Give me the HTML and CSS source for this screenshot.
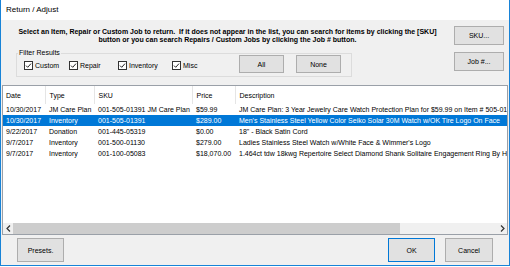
FILE: index.html
```html
<!DOCTYPE html>
<html lang="en">
<head>
  <meta charset="UTF-8">
  <title>Return / Adjust</title>
  <link rel="stylesheet" href="styles.css">
</head>
<body>
  <div class="window">
    <div class="titleBar">Return / Adjust</div>

    <div class="dialog">
      <div class="topSection">
        <div class="leftPart">
          <div class="instructions">
            Select an Item, Repair or Custom Job to return.&nbsp; If it does not appear in the list, you can search for items by clicking the [SKU]<br>
            button or you can search Repairs / Custom Jobs by clicking the Job # button.
          </div>

          <fieldset class="filterBox">
            <legend>Filter Results</legend>
            <div class="filterRow">
              <label class="check"><svg width="9" height="9" viewBox="0 0 9 9"><rect x="0.5" y="0.5" width="8" height="8" fill="#fff" stroke="#333"/><path d="M2 4.6 L3.7 6.3 L7 2.6" fill="none" stroke="#222" stroke-width="1"/></svg>Custom</label>
              <label class="check"><svg width="9" height="9" viewBox="0 0 9 9"><rect x="0.5" y="0.5" width="8" height="8" fill="#fff" stroke="#333"/><path d="M2 4.6 L3.7 6.3 L7 2.6" fill="none" stroke="#222" stroke-width="1"/></svg>Repair</label>
              <label class="check"><svg width="9" height="9" viewBox="0 0 9 9"><rect x="0.5" y="0.5" width="8" height="8" fill="#fff" stroke="#333"/><path d="M2 4.6 L3.7 6.3 L7 2.6" fill="none" stroke="#222" stroke-width="1"/></svg>Inventory</label>
              <label class="check"><svg width="9" height="9" viewBox="0 0 9 9"><rect x="0.5" y="0.5" width="8" height="8" fill="#fff" stroke="#333"/><path d="M2 4.6 L3.7 6.3 L7 2.6" fill="none" stroke="#222" stroke-width="1"/></svg>Misc</label>
              <button class="btn filterBtn">All</button>
              <button class="btn filterBtn noneBtn">None</button>
            </div>
          </fieldset>
        </div>

        <div class="rightPart">
          <button class="btn sideBtn">SKU...</button>
          <button class="btn sideBtn">Job #...</button>
        </div>
      </div>

      <div class="listView">
        <div class="listArea">
          <table class="grid">
            <colgroup>
              <col class="colDate"><col class="colType"><col class="colSku"><col class="colPrice"><col>
            </colgroup>
            <thead>
              <tr><th>Date</th><th>Type</th><th>SKU</th><th>Price</th><th>Description</th></tr>
            </thead>
            <tbody>
              <tr><td>10/30/2017</td><td>JM Care Plan</td><td>001-505-01391 JM Care Plan</td><td>$59.99</td><td>JM Care Plan: 3 Year Jewelry Care Watch Protection Plan for $59.99 on Item # 505-01391</td></tr>
              <tr class="selected"><td>10/30/2017</td><td>Inventory</td><td>001-505-01391</td><td>$289.00</td><td>Men's Stainless Steel Yellow Color Seiko Solar 30M Watch w/OK Tire Logo On Face</td></tr>
              <tr><td>9/22/2017</td><td>Donation</td><td>001-445-05319</td><td>$0.00</td><td>18" - Black Satin Cord</td></tr>
              <tr><td>9/7/2017</td><td>Inventory</td><td>001-500-01130</td><td>$279.00</td><td>Ladies Stainless Steel Watch w/White Face &amp; Wimmer's Logo</td></tr>
              <tr><td>9/7/2017</td><td>Inventory</td><td>001-100-05083</td><td>$18,070.00</td><td>1.464ct tdw 18kwg Repertoire Select Diamond Shank Solitaire Engagement Ring By HC</td></tr>
            </tbody>
          </table>
        </div>
        <div class="hScroll">
          <div class="arrow"><svg width="5" height="7" viewBox="0 0 5 7"><path d="M4 0.5 L1 3.5 L4 6.5" fill="none" stroke="#333" stroke-width="1.2"/></svg></div>
          <div class="thumb"></div>
          <div class="track"></div>
          <div class="arrow"><svg width="5" height="7" viewBox="0 0 5 7"><path d="M1 0.5 L4 3.5 L1 6.5" fill="none" stroke="#333" stroke-width="1.2"/></svg></div>
        </div>
      </div>

      <div class="bottomSection">
        <button class="btn footBtn">Presets.</button>
        <button class="btn footBtn okBtn">OK</button>
        <button class="btn footBtn">Cancel</button>
      </div>
    </div>
  </div>
</body>
</html>
```

FILE: styles.css
```css
body {
  margin: 0;
  padding: 0;
  background: #ffffff;
  font-family: 'Liberation Sans', Arial, sans-serif;
  font-size: 7px;
  color: #000;
}

.window {
  width: 510px;
  height: 266px;
  box-sizing: border-box;
  border-left: 1px solid #1883d7;
  border-right: 1px solid #1883d7;
  border-bottom: 1px solid #1883d7;
  display: flex;
  flex-direction: column;
}

.titleBar {
  height: 20px;
  line-height: 20px;
  padding-left: 5px;
  font-size: 8px;
  background: #ffffff;
}

.dialog {
  flex: 1;
  background: #f0f0f0;
  display: flex;
  flex-direction: column;
}

.topSection {
  height: 65px;
  display: flex;
}

.leftPart {
  flex: 1;
  padding: 8px 7px 0 7px;
}

.instructions {
  font-weight: bold;
  text-align: center;
  line-height: 8px;
  white-space: nowrap;
}

.filterBox {
  width: 336px;
  box-sizing: border-box;
  margin: 5px 0 0 8px;
  padding: 0 0 3px 1px;
  border: 1px solid #dcdcdc;
}

.filterBox legend {
  padding: 0 1px;
  line-height: 8px;
  font-size: 7px;
}

.filterRow {
  display: grid;
  grid-template-columns: 45px 49px 54px 67px 45px 57px;
  align-items: center;
  height: 18px;
  margin: -2px 0 0 6px;
}

.check {
  display: flex;
  align-items: center;
  gap: 2px;
  padding-top: 3px;
}

.check svg {
  flex: none;
}

.btn {
  font-family: 'Liberation Sans', Arial, sans-serif;
  font-size: 7px;
  color: #000;
  background: #e1e1e1;
  border: 1px solid #adadad;
  padding: 0;
  margin: 0;
}

.filterBtn {
  width: 45px;
  height: 18px;
}

.noneBtn {
  justify-self: end;
}

.rightPart {
  width: 50px;
  padding: 6px 5px 0 0;
  display: flex;
  flex-direction: column;
  gap: 7px;
}

.sideBtn {
  height: 19px;
}

.listView {
  height: 150px;
  box-sizing: border-box;
  margin: 0 1px;
  border: 1px solid #9aa0a8;
  display: flex;
  flex-direction: column;
  background: #ffffff;
}

.listArea {
  flex: 1;
  overflow: hidden;
}

.grid {
  border-collapse: collapse;
  table-layout: fixed;
  width: 504px;
  white-space: nowrap;
}

.colDate { width: 42px; }
.colType { width: 49px; }
.colSku { width: 98px; }
.colPrice { width: 43px; }

.grid th {
  height: 17px;
  padding: 1px 0 0 4px;
  font-weight: normal;
  text-align: left;
  border-right: 1px solid #e5e5e5;
  overflow: hidden;
}

.grid th:first-child,
.grid td:first-child {
  padding-left: 3px;
}

.grid th:last-child {
  border-right: none;
}

.grid td {
  height: 11px;
  line-height: 11px;
  padding: 0 0 0 4px;
  overflow: hidden;
}

.grid td:last-child {
  overflow: visible;
}

.selected td {
  background: #0078d7;
  color: #ffffff;
}

.hScroll {
  height: 11px;
  display: flex;
  background: #f0f0f0;
}

.arrow {
  width: 10px;
  display: flex;
  align-items: center;
  justify-content: center;
}

.thumb {
  width: 387px;
  background: #cdcdcd;
}

.track {
  flex: 1;
}

.bottomSection {
  flex: 1;
  display: flex;
  align-items: flex-start;
  gap: 10px;
  padding: 3px 16px 0 16px;
}

.footBtn {
  width: 47px;
  height: 24px;
}

.okBtn {
  margin-left: auto;
  border-color: #0078d7;
}

.footBtn:last-child {
  width: 48px;
}
```
